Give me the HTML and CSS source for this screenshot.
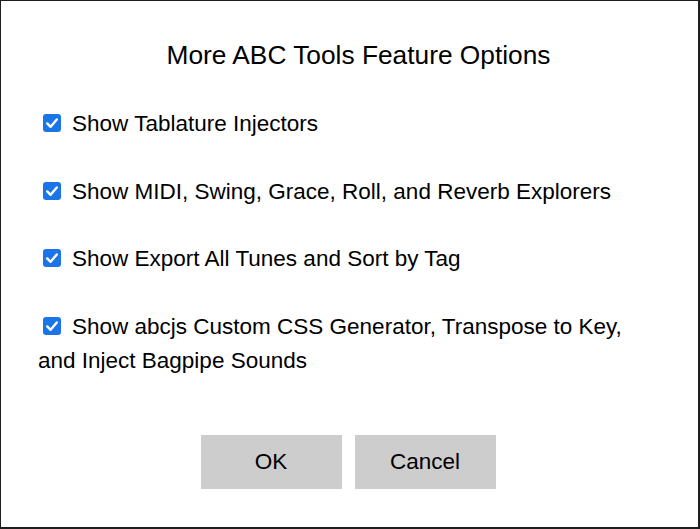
FILE: index.html
```html
<!DOCTYPE html>
<html>
<head>
<meta charset="utf-8">
<link rel="stylesheet" href="styles.css">
</head>
<body>
<div class="dialog">
  <h1 class="title">More ABC Tools Feature Options</h1>
  <div class="options">
    <label class="opt"><span class="cb"><svg viewBox="0 0 18 18" width="18" height="18"><rect x="0" y="0" width="18" height="18" rx="3" fill="#1b74e8"/><path d="M4.2 9.4 L7.6 12.8 L13.8 5.4" fill="none" stroke="#fff" stroke-width="2.4" stroke-linecap="round" stroke-linejoin="round"/></svg></span>Show Tablature Injectors</label>
    <label class="opt"><span class="cb"><svg viewBox="0 0 18 18" width="18" height="18"><rect x="0" y="0" width="18" height="18" rx="3" fill="#1b74e8"/><path d="M4.2 9.4 L7.6 12.8 L13.8 5.4" fill="none" stroke="#fff" stroke-width="2.4" stroke-linecap="round" stroke-linejoin="round"/></svg></span>Show MIDI, Swing, Grace, Roll, and Reverb Explorers</label>
    <label class="opt"><span class="cb"><svg viewBox="0 0 18 18" width="18" height="18"><rect x="0" y="0" width="18" height="18" rx="3" fill="#1b74e8"/><path d="M4.2 9.4 L7.6 12.8 L13.8 5.4" fill="none" stroke="#fff" stroke-width="2.4" stroke-linecap="round" stroke-linejoin="round"/></svg></span>Show Export All Tunes and Sort by Tag</label>
    <label class="opt"><span class="cb"><svg viewBox="0 0 18 18" width="18" height="18"><rect x="0" y="0" width="18" height="18" rx="3" fill="#1b74e8"/><path d="M4.2 9.4 L7.6 12.8 L13.8 5.4" fill="none" stroke="#fff" stroke-width="2.4" stroke-linecap="round" stroke-linejoin="round"/></svg></span>Show abcjs Custom CSS Generator, Transpose to Key, and Inject Bagpipe Sounds</label>
  </div>
  <div class="buttons">
    <button class="btn">OK</button>
    <button class="btn">Cancel</button>
  </div>
</div>
</body>
</html>
```
FILE: styles.css
```css
html, body {
  margin: 0;
  padding: 0;
  background: #fff;
}
body {
  font-family: "Liberation Sans", Arial, sans-serif;
  color: #000;
}
.dialog {
  box-sizing: border-box;
  width: 700px;
  height: 529px;
  border: 1px solid #1e1e1e;
  border-right-width: 2px;
  border-bottom-width: 2px;
  padding: 0 37px;
}
.title {
  margin: 0;
  padding-top: 39px;
  padding-left: 18px;
  font-size: 26.3px;
  font-weight: normal;
  text-align: center;
  line-height: 30px;
}
.options {
  margin-top: 37px;
  display: flex;
  flex-direction: column;
  gap: 33px;
}
.opt {
  display: block;
  font-size: 22.5px;
  line-height: 34.6px;
}
.cb {
  display: inline-block;
  width: 18px;
  height: 18px;
  margin: 0 11px 0 5px;
  vertical-align: -1px;
}
.cb svg { display: block; }
.buttons {
  margin-top: 56px;
  display: flex;
  justify-content: center;
  gap: 13px;
  padding-right: 3px;
}
.btn {
  width: 141px;
  height: 54px;
  border: none;
  background: #cdcdcd;
  font-family: "Liberation Sans", Arial, sans-serif;
  font-size: 22.5px;
  color: #000;
  padding: 0;
}
```
